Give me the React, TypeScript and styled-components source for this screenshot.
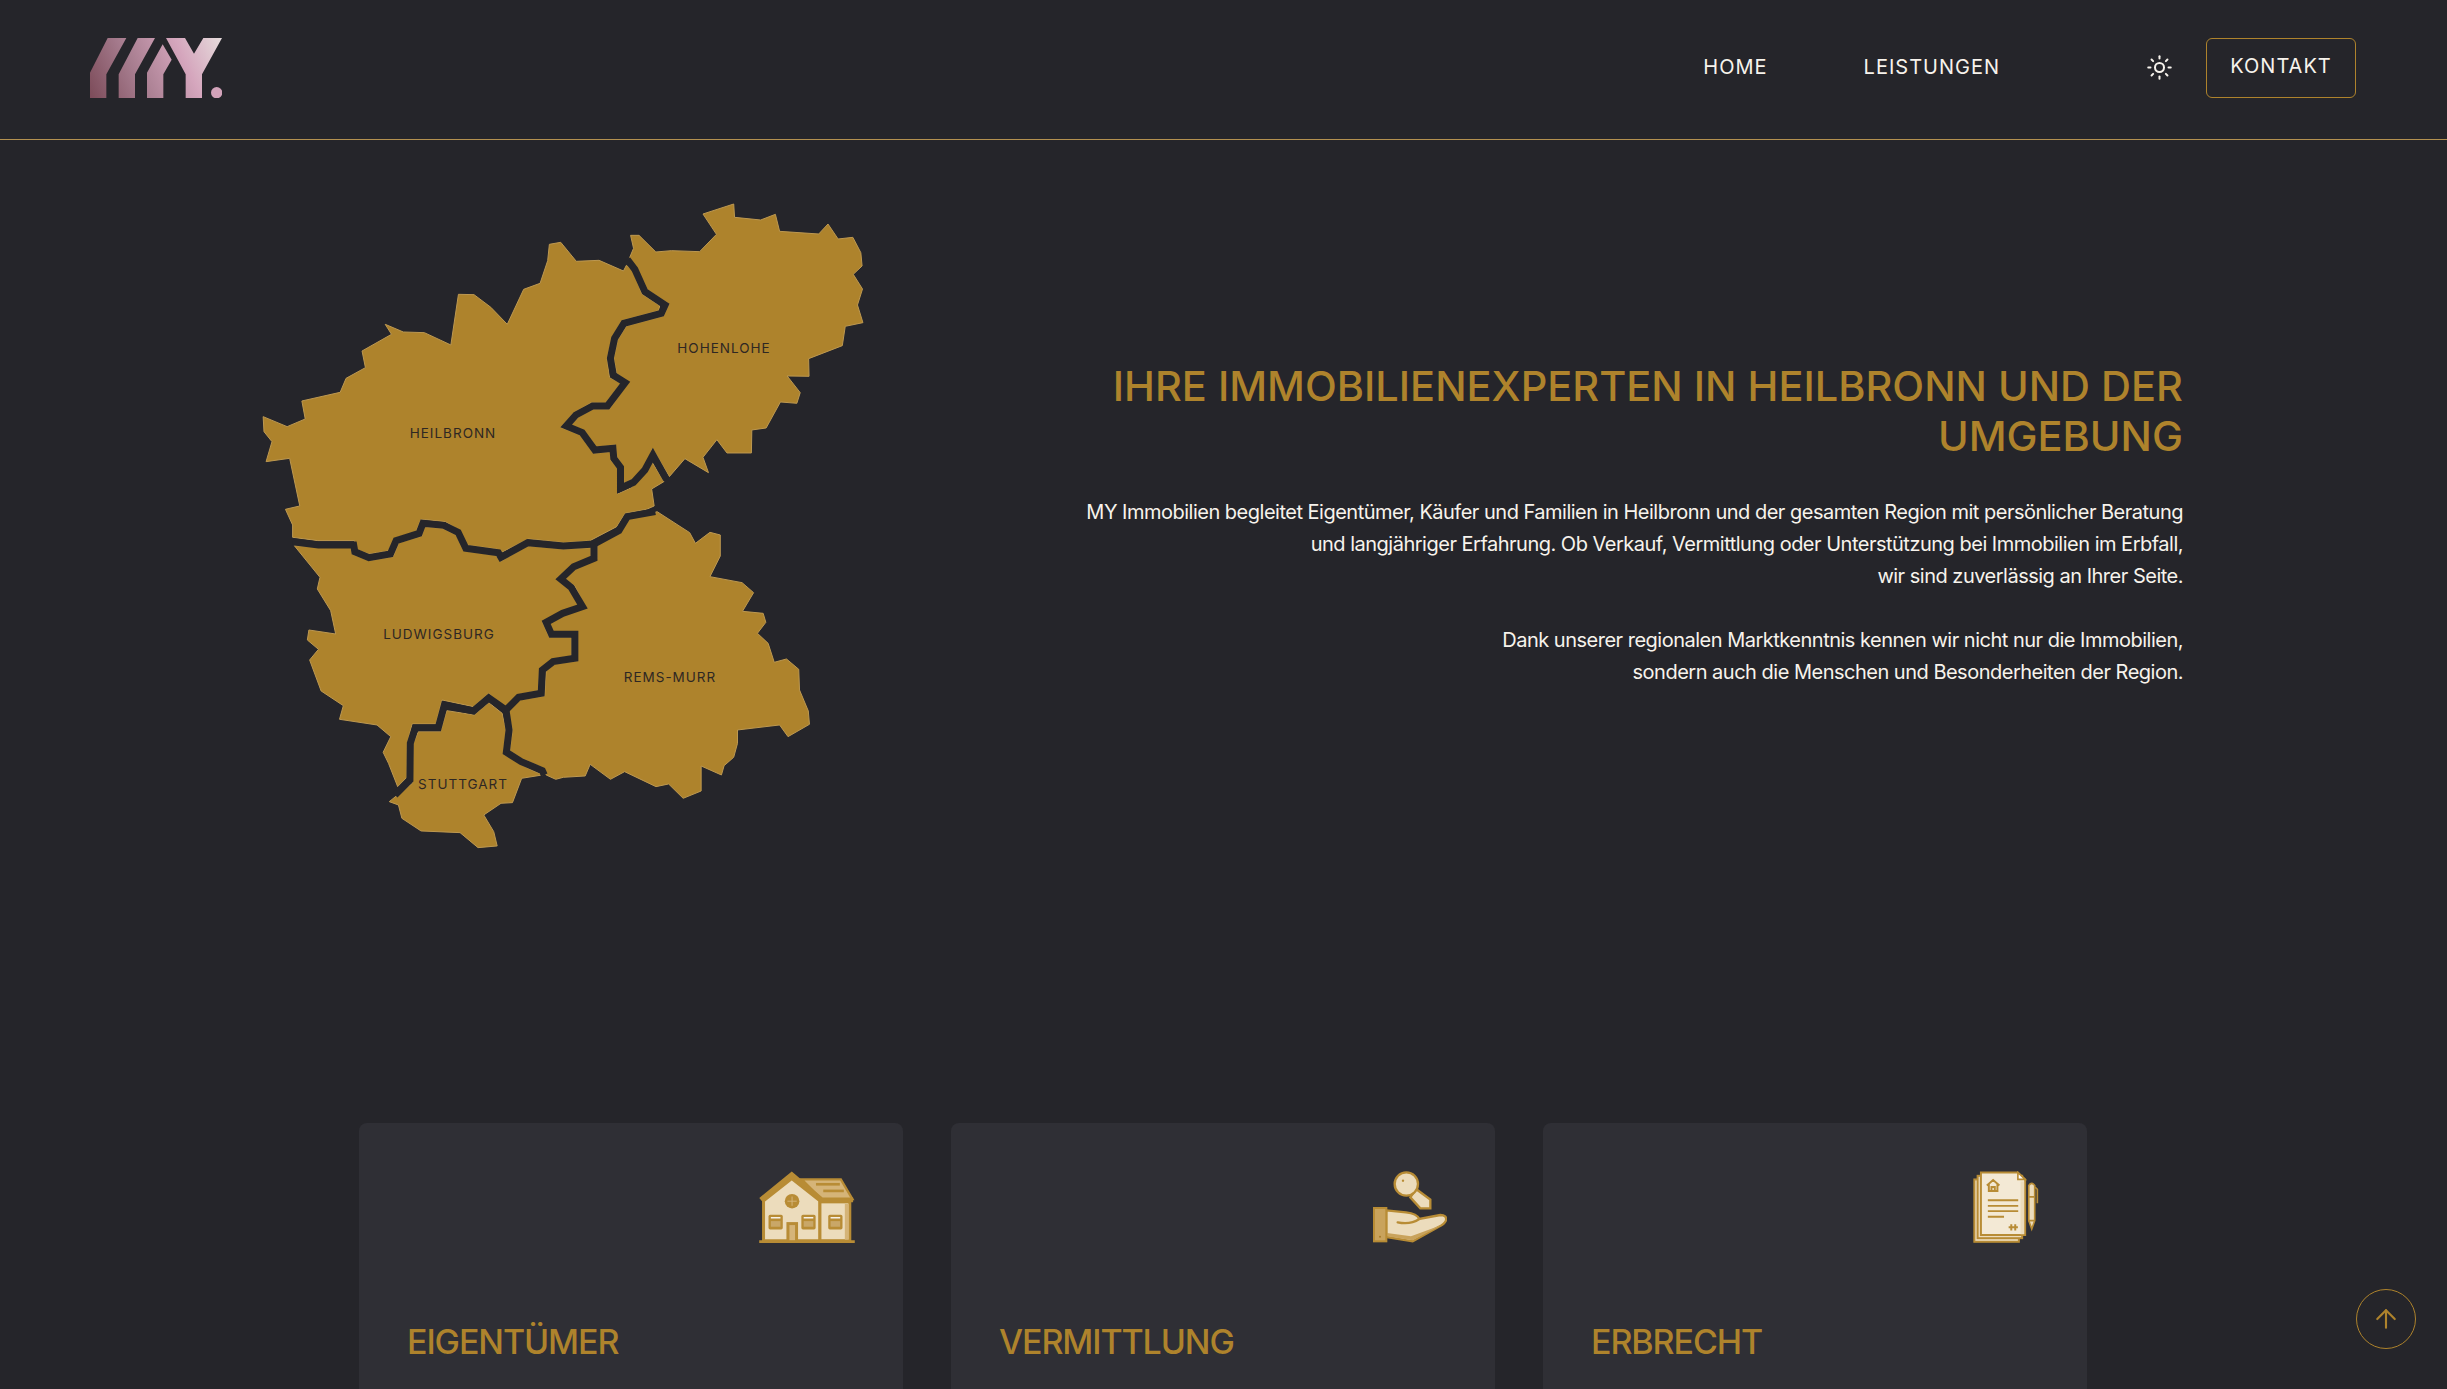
import React from "react";
import { styled, createGlobalStyle } from "styled-components";
import { ArrowUp, Sun } from "lucide-react";

const BACKGROUND = "#25252a";
const GOLD = "#ae832c";
const ICON_GOLD = "#b88c35";
const CREAM = "#ecdcbc";
const TAN = "#d5b478";

const GlobalStyle = createGlobalStyle`
  html, body {
    margin: 0;
    padding: 0;
    background: ${BACKGROUND};
  }
  body {
    font-family: Inter, "Liberation Sans", sans-serif;
    color: #f7f3ec;
  }
`;

const Page = styled.div`
  height: 100vh;
  overflow: hidden;
  background: ${BACKGROUND};
`;

const Header = styled.header`
  box-sizing: border-box;
  height: 140px;
  padding: 38px 91px 0 90px;
  display: flex;
  align-items: flex-start;
  border-bottom: 1px solid #b39150;
`;

const Logo = styled.svg`
  display: block;
  width: 132px;
  height: 60px;
`;

const Nav = styled.nav`
  margin-left: auto;
  display: flex;
  align-items: center;
  height: 60px;
`;

const NavLink = styled.a<{ $gap: number }>`
  font-size: 20px;
  letter-spacing: 1px;
  margin-right: ${($) => $.$gap}px;
  padding-bottom: 2px;
`;

const ThemeToggle = styled.span`
  display: flex;
  margin-right: 33px;
  margin-bottom: 1px;
`;

const ContactButton = styled.a`
  box-sizing: border-box;
  width: 150px;
  height: 60px;
  display: flex;
  align-items: center;
  justify-content: center;
  border: 1px solid ${GOLD};
  border-radius: 6px;
  font-size: 20px;
  letter-spacing: 1px;
  padding-bottom: 4px;
`;

const Hero = styled.section`
  display: flex;
  align-items: center;
  justify-content: space-between;
  padding: 60px 264px 0 262px;
`;

const RegionMap = styled.svg`
  display: block;
  width: 606px;
  height: 652px;
  flex: none;
`;

const Region = styled.polygon`
  fill: ${GOLD};
  stroke: #bd9850;
  stroke-width: 1px;
  stroke-linejoin: round;
  vector-effect: non-scaling-stroke;
`;

const RegionBorder = styled.polyline`
  fill: none;
  stroke: ${BACKGROUND};
  stroke-width: 7px;
  stroke-linejoin: miter;
  vector-effect: non-scaling-stroke;
`;

const RegionLabel = styled.text`
  font-family: Inter, "Liberation Sans", sans-serif;
  font-size: 13.5px;
  letter-spacing: 1px;
  fill: #2e2723;
  text-anchor: middle;
  dominant-baseline: central;
`;

const HeroText = styled.div`
  text-align: right;
  padding-bottom: 3px;
`;

const Title = styled.h1`
  margin: 0 0 35px;
  font-size: 41.5px;
  line-height: 50px;
  font-weight: 500;
  letter-spacing: 0;
  color: ${GOLD};
`;

const Paragraph = styled.p`
  margin: 0 0 32px;
  font-size: 20px;
  line-height: 32px;
  letter-spacing: -0.5px;
  &:last-child {
    margin-bottom: 0;
  }
`;

const Cards = styled.section`
  display: grid;
  grid-template-columns: repeat(3, 544px);
  justify-content: center;
  gap: 48px;
  margin-top: 271px;
  padding-right: 1px;
`;

const Card = styled.article`
  box-sizing: border-box;
  height: 420px;
  padding: 48px;
  background: #2f2f35;
  border-radius: 8px;
`;

const CardIcon = styled.svg`
  display: block;
  height: 72px;
  margin-left: auto;
`;

const CardTitle = styled.h2`
  margin: 78px 0 0;
  font-size: 34px;
  line-height: 42px;
  font-weight: 500;
  letter-spacing: -1.1px;
  color: ${GOLD};
`;

const ScrollTop = styled.button`
  position: fixed;
  right: 31px;
  bottom: 40px;
  width: 60px;
  height: 60px;
  padding: 0;
  display: flex;
  align-items: center;
  justify-content: center;
  background: transparent;
  border: 1px solid ${GOLD};
  border-radius: 50%;
  color: ${GOLD};
`;

function BrandLogo() {
  return (
    <Logo viewBox="270 113 396 180">
      <defs>
        <linearGradient id="logoFill" gradientUnits="userSpaceOnUse" x1="270" y1="293" x2="666" y2="113">
          <stop offset="0" stopColor="#7c4b59" />
          <stop offset="0.35" stopColor="#a67c8e" />
          <stop offset="0.7" stopColor="#d5a6bd" />
          <stop offset="1" stopColor="#e6dcdc" />
        </linearGradient>
      </defs>
      <g fill="url(#logoFill)">
        <polygon points="270,217 323,113 379,113 319,222 319,293 270,293" />
        <polygon points="356,222 413,113 465,113 405,222 405,293 356,293" />
        <polygon points="441,217 488,132 515,178 490,222 490,293 441,293" />
        <polygon points="498,113 555,113 582,160 610,113 666,113 606,222 606,293 557,293 557,222" />
      </g>
      <circle cx="650" cy="277" r="17" fill="#d3a3ba" />
    </Logo>
  );
}

// Region outlines were traced from crops, so each group has its own scale
function GermanRegions() {
  return (
    <RegionMap viewBox="262 200 606 652">
      <g transform="translate(240 190) scale(0.4209 0.3333)">
        <Region points="345,403 388,426 438,428 501,465 519,313 556,314 596,352 635,403 674,298 713,280 731,212 735,163 762,157 799,214 853,211 911,243 918,226 933,240 955,312 997,347 995,362 907,392 885,440 872,505 878,562 905,580 868,640 835,638 793,668 762,712 808,735 840,790 880,785 882,812 897,835 897,912 930,893 960,855 980,818 1007,875 978,897 984,948 966,958 915,970 895,1010 830,1053 770,1058 685,1047 620,1088 610,1077 535,1065 520,1020 488,995 430,988 418,1025 368,1045 352,1083 307,1092 278,1080 272,1052 185,1052 125,1042 125,1005 108,958 142,948 118,805 62,815 76,755 57,725 55,680 112,710 155,687 147,633 238,607 252,565 298,533 290,483 360,433" />
        <Region points="1100,72 1173,42 1175,82 1237,90 1272,73 1282,124 1375,132 1397,102 1421,147 1456,142 1475,188 1478,228 1457,253 1479,297 1467,345 1480,398 1438,409 1431,467 1351,506 1352,559 1300,558 1331,608 1323,640 1284,636 1250,714 1216,720 1215,789 1157,789 1133,749 1100,802 1113,848 1057,806 1020,860 980,775 965,825 940,862 912,880 910,828 895,800 892,764 847,772 818,722 787,705 805,680 840,657 878,657 923,577 895,550 888,505 897,450 918,408 1006,378 1020,342 968,300 942,233 925,205 935,175 928,136 948,136 988,186 1025,182 1092,185 1132,133" />
        <RegionBorder points="920,208 938,238 962,305 1010,345 1001,370 912,400 890,445 880,505 887,556 915,578 873,648 838,648 798,675 775,708 813,728 843,780 886,775 888,805 904,832 904,895 935,877 962,840 981,795 1013,868" />
      </g>
      <g transform="translate(240 500) scale(0.3827 0.3333)">
        <Region points="142,137 290,143 293,162 337,182 400,170 415,128 475,108 482,80 530,85 565,105 585,153 668,165 680,185 752,137 845,147 917,143 917,172 868,193 826,238 858,265 888,320 840,333 790,365 808,412 866,412 866,468 815,478 783,508 779,572 725,585 690,625 650,580 610,620 528,600 512,672 450,672 437,730 436,832 412,860 388,790 374,757 394,710 358,675 260,658 270,617 212,573 182,480 205,448 176,420 180,390 250,402 237,332 202,267 209,232" />
        <Region points="390,905 450,850 453,730 466,695 524,695 540,632 612,645 650,608 685,640 695,690 688,762 735,795 790,825 736,835 712,908 682,910 637,945 663,995 672,1038 622,1043 575,998 473,993 423,955 414,915" />
        <Region points="1090,35 1175,98 1190,130 1228,97 1255,105 1255,168 1228,230 1312,248 1342,278 1313,334 1367,340 1374,367 1352,400 1380,430 1396,487 1428,477 1460,508 1462,570 1485,633 1488,673 1432,710 1410,675 1300,690 1300,730 1290,772 1265,797 1258,825 1205,798 1205,873 1158,895 1120,852 1087,860 1005,815 968,838 915,793 902,828 845,832 825,838 800,825 790,803 735,775 705,752 712,690 700,635 730,600 796,588 800,510 820,492 882,483 882,395 818,395 808,368 845,345 902,320 875,258 850,237 875,205 933,178 933,130 995,90 1015,55 1070,43" />
        <RegionBorder points="138,125 205,135 297,135 300,155 337,173 393,162 408,122 468,100 478,70 533,76 570,97 590,145 675,158 682,172 752,128 845,138 925,132 990,92 1012,50 1085,35" />
        <RegionBorder points="925,132 925,175 872,200 838,237 865,262 895,320 843,340 800,367 814,403 875,403 875,475 818,485 790,510 787,580 728,592 695,630" />
        <RegionBorder points="795,825 790,812 735,785 696,757 703,690 695,630 650,594 610,633 534,615 518,683 458,683 445,730 444,840 405,885" />
      </g>
      <RegionLabel x="453" y="433">HEILBRONN</RegionLabel>
      <RegionLabel x="724" y="348">HOHENLOHE</RegionLabel>
      <RegionLabel x="439" y="634">LUDWIGSBURG</RegionLabel>
      <RegionLabel x="670" y="677">REMS-MURR</RegionLabel>
      <RegionLabel x="463" y="784">STUTTGART</RegionLabel>
    </RegionMap>
  );
}

function HouseIcon() {
  return (
    <CardIcon viewBox="57 65 288 217" width={96}>
      <polygon points="185,90 303,90 338,150 245,150" fill={TAN} stroke={ICON_GOLD} strokeWidth="7" />
      <polygon points="70,155 155,88 240,155 240,275 70,275" fill={CREAM} stroke={ICON_GOLD} strokeWidth="9" />
      <rect x="240" y="158" width="90" height="117" fill={CREAM} stroke={ICON_GOLD} strokeWidth="9" />
      <rect x="315" y="164" width="12" height="108" fill={TAN} />
      <polyline points="62,152 155,76 245,152 340,152" fill="none" stroke={ICON_GOLD} strokeWidth="15" />
      <line x1="228" y1="105" x2="300" y2="105" stroke={ICON_GOLD} strokeWidth="8" />
      <line x1="250" y1="125" x2="312" y2="125" stroke={ICON_GOLD} strokeWidth="8" />
      <circle cx="156" cy="156" r="22" fill={ICON_GOLD} />
      <path d="M156 142v28M142 156h28" stroke={TAN} strokeWidth="3" />
      {[85, 184, 265].map((x) => (
        <g key={x}>
          <rect x={x} y="197" width="43" height="44" rx="5" fill={ICON_GOLD} />
          <rect x={x + 7} y="204" width="29" height="4" fill="#fff" />
          <rect x={x + 7} y="216" width="29" height="17" fill="#c9a768" />
        </g>
      ))}
      <rect x="139" y="219" width="35" height="56" fill={ICON_GOLD} />
      <rect x="148" y="228" width="17" height="47" fill={TAN} />
      <line x1="57" y1="278" x2="345" y2="278" stroke={ICON_GOLD} strokeWidth="8" />
    </CardIcon>
  );
}

function HandKeyIcon() {
  return (
    <CardIcon viewBox="66 66 222 216" width={74}>
      <polygon points="195,120 238,152 238,178 208,178 178,145" fill={CREAM} stroke={ICON_GOLD} strokeWidth="7" />
      <circle cx="166" cy="105" r="35" fill={CREAM} stroke={ICON_GOLD} strokeWidth="7" />
      <circle cx="156" cy="95" r="3.5" fill={ICON_GOLD} />
      <path
        d="M106 184 L165 190 Q198 194 205 210 L268 198 Q288 198 285 214 Q280 226 262 234 L185 277 L106 264Z"
        fill={CREAM}
        stroke={ICON_GOLD}
        strokeWidth="7"
      />
      <path d="M108 252 L180 262 L272 228 L262 234 L185 274 L108 262Z" fill="#c9a35c" />
      <path d="M140 220 Q178 228 205 210" fill="none" stroke={ICON_GOLD} strokeWidth="7" strokeLinecap="round" />
      <rect x="69" y="177" width="37" height="100" fill="#c9a35c" stroke={ICON_GOLD} strokeWidth="6" />
      <circle cx="87" cy="263" r="3" fill="#a67a28" />
    </CardIcon>
  );
}

function ContractIcon() {
  return (
    <CardIcon viewBox="68 65 200 217" width={66}>
      <rect x="72" y="90" width="135" height="189" fill={CREAM} stroke={ICON_GOLD} strokeWidth="6" />
      <rect x="82" y="79" width="135" height="189" fill={CREAM} stroke={ICON_GOLD} strokeWidth="6" />
      <polygon points="92,69 204,69 226,90 226,258 92,258" fill="#f3e9d5" stroke={ICON_GOLD} strokeWidth="6" />
      <polygon points="204,69 226,90 204,90" fill="#fff" stroke={ICON_GOLD} strokeWidth="5" />
      <rect x="212" y="96" width="11" height="160" fill={CREAM} />
      <path d="M110 108 L129 92 L148 108 M116 104 V125 H142 V104 M124 125 V113 H134 V125" fill="none" stroke={ICON_GOLD} strokeWidth="6" />
      <path d="M113 153H205M113 170H205M113 186H205M113 203H162" stroke={ICON_GOLD} strokeWidth="5.5" />
      <path d="M176 235H204M184 226V245M196 226V245" stroke={ICON_GOLD} strokeWidth="6" />
      <path d="M237 108 Q246 96 255 108 V215 L246 240 L237 215Z" fill={CREAM} stroke={ICON_GOLD} strokeWidth="5" />
      <path d="M236 143H256M236 215H256" stroke={ICON_GOLD} strokeWidth="5" />
      <path d="M256 113 L263 120 V162" fill="none" stroke={ICON_GOLD} strokeWidth="5" />
    </CardIcon>
  );
}

export default function App() {
  return (
    <Page>
      <GlobalStyle />
      <Header>
        <BrandLogo />
        <Nav>
          <NavLink $gap={96}>HOME</NavLink>
          <NavLink $gap={146}>LEISTUNGEN</NavLink>
          <ThemeToggle>
            <Sun size={27} strokeWidth={1.8} />
          </ThemeToggle>
          <ContactButton>KONTAKT</ContactButton>
        </Nav>
      </Header>
      <main>
        <Hero>
          <GermanRegions />
          <HeroText>
            <Title>
              IHRE IMMOBILIENEXPERTEN IN HEILBRONN UND DER
              <br />
              UMGEBUNG
            </Title>
            <Paragraph>
              MY Immobilien begleitet Eigentümer, Käufer und Familien in Heilbronn und der gesamten Region mit persönlicher Beratung
              <br />
              und langjähriger Erfahrung. Ob Verkauf, Vermittlung oder Unterstützung bei Immobilien im Erbfall,
              <br />
              wir sind zuverlässig an Ihrer Seite.
            </Paragraph>
            <Paragraph>
              Dank unserer regionalen Marktkenntnis kennen wir nicht nur die Immobilien,
              <br />
              sondern auch die Menschen und Besonderheiten der Region.
            </Paragraph>
          </HeroText>
        </Hero>
        <Cards>
          <Card>
            <HouseIcon />
            <CardTitle>EIGENTÜMER</CardTitle>
          </Card>
          <Card>
            <HandKeyIcon />
            <CardTitle>VERMITTLUNG</CardTitle>
          </Card>
          <Card>
            <ContractIcon />
            <CardTitle>ERBRECHT</CardTitle>
          </Card>
        </Cards>
      </main>
      <ScrollTop aria-label="Nach oben">
        <ArrowUp size={30} strokeWidth={1.7} />
      </ScrollTop>
    </Page>
  );
}
